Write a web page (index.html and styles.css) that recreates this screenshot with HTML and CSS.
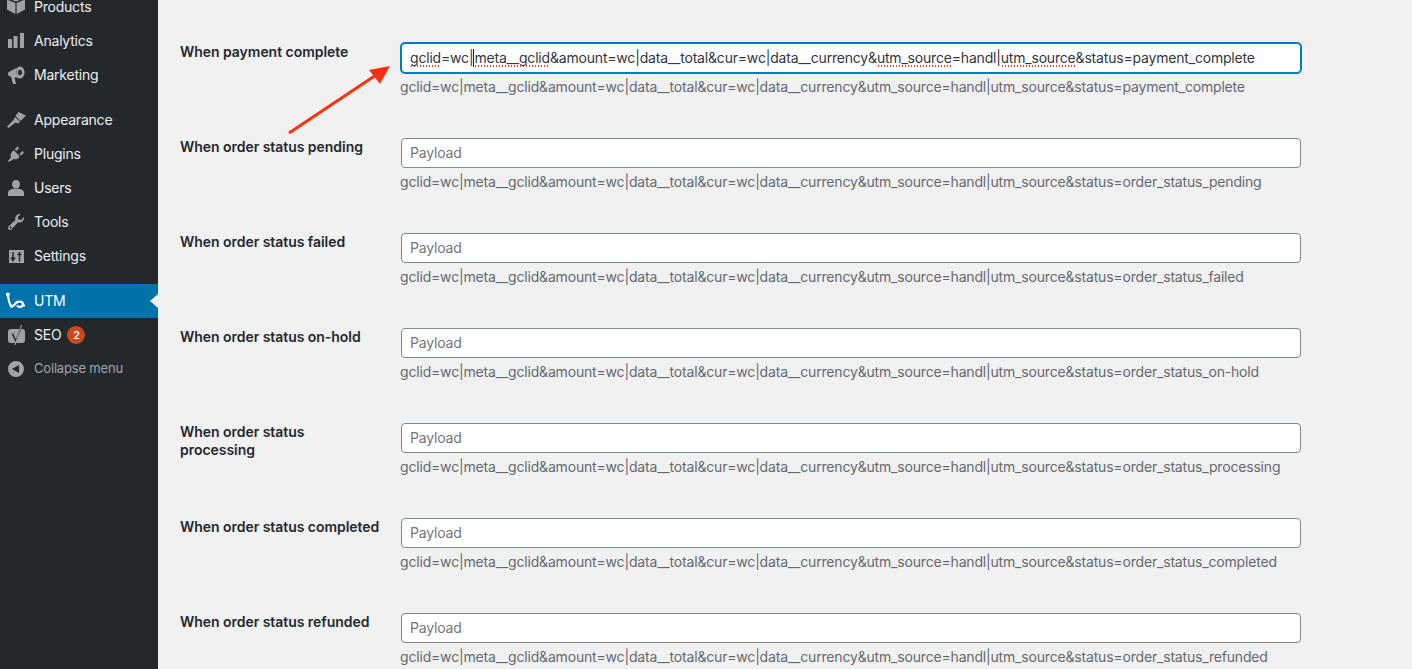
FILE: index.html
```html
<!DOCTYPE html>
<html lang="en">
<head>
<meta charset="utf-8">
<title>UTM settings</title>
<link rel="stylesheet" href="styles.css">
</head>
<body>
<div class="page">
  <nav class="sidebar">
    <a class="item"><svg class="icon" viewBox="0 0 20 20"><path d="M10 -4 1 -.5V1l9 3.500L19 1V-.5zM1 2.500v10L9.400 17V6zM19 2.500l-8.400 3.500v11l8.400-4.500z"/></svg><span>Products</span></a>
    <a class="item"><svg class="icon" viewBox="0 0 20 20"><path d="M2 8h4v9H2zM7.500 5h4v12h-4zM14 2h4v15h-4z"/></svg><span>Analytics</span></a>
    <a class="item sep"><svg class="icon" viewBox="0 0 20 20"><path d="M2 8.500c0-1 .8-1.600 1.600-2L11.500 2.500C9.800 6 10 10 12.500 13L8.600 12.200 10 19H7L5 11.700 3.500 11.200C2.500 10.800 2 10 2 8.500z"/><path fill-rule="evenodd" d="M14 1.500c2.500 0 4.500 2.700 4.500 6s-2 6-4.500 6-3.500-2.700-3.500-6 1-6 3.500-6zM14 4.800c-1.200 0-2 1.200-2 2.700s.8 2.700 2 2.700 2-1.200 2-2.700-.8-2.700-2-2.700z"/></svg><span>Marketing</span></a>
    <a class="item"><svg class="icon" viewBox="0 0 20 20"><path d="M12.500 2 20 5.500 14.500 11 9.500 6zM9 7l5 4.500-2 2-2.500-1L2.500 18 1 16.500 7.500 10z"/></svg><span>Appearance</span></a>
    <a class="item"><svg class="icon" viewBox="0 0 20 20"><path d="M8 6.500 13.500 12c-.5 2.500-3 4-6 3L3 18l-1-1 3-3.800C4 10.500 5.500 7.500 8 6.500zM11.500 2.500 13.200 4l-3 3L8.700 5.500zM16.500 7l1.500 1.500-3 3-1.500-1.500z"/></svg><span>Plugins</span></a>
    <a class="item"><svg class="icon" viewBox="0 0 20 20"><ellipse cx="10" cy="6.200" rx="3.800" ry="4.200"/><path d="M2 18v-3c0-2.500 3-4 5-4.200h6c2 .2 5 1.700 5 4.200v3z"/></svg><span>Users</span></a>
    <a class="item"><svg class="icon" viewBox="0 0 20 20"><path fill-rule="evenodd" d="M18 5c.5 3.500-2.500 6.300-6 5.300L6 16.700c-1 1.300-2.600 1.600-3.400.8S1.700 15 3 14l6.400-6c-1-3.500 1.800-6.300 5.400-6l-3 3 .6 2.500 2.500.6zM4.500 14.500a1 1 0 1 0 .01 0z"/></svg><span>Tools</span></a>
    <a class="item sep"><svg class="icon" viewBox="0 0 20 20"><rect x="3" y="4" width="15" height="13"/><path class="dark" d="M7 6v9.500M5 11.500l2 3 2-3M13.500 15.500V6M11.500 8.500h4"/></svg><span>Settings</span></a>
    <a class="item active"><svg class="icon" viewBox="0 0 20 20"><circle cx="1.800" cy="3.500" r="2"/><circle cx="5.500" cy="15.200" r="1.600"/><path class="utm" d="M1.800 3.500C2.500 8 3 13.500 5.500 15.200 8 16 8.500 13 10.500 11.500c2-1.500 6-1.500 6.500 1.500 0 3.500-4.500 3.700-6 1.500M16.500 14.500h2.500"/></svg><span>UTM</span></a>
    <a class="item"><svg class="icon" viewBox="0 0 20 20"><rect x="2" y="4" width="17" height="14" rx="3"/><path class="dark" d="M6.500 8.500 9.500 15.500M14.500 4 9.500 17"/><path class="slash" d="M15.500 0 9 20"/></svg><span>SEO</span><b class="badge">2</b></a>
    <a class="item collapse"><svg class="icon" viewBox="0 0 20 20"><path fill-rule="evenodd" d="M10 2a8 8 0 1 1 0 16 8 8 0 0 1 0-16zM13 6l-7 4 7 4z"/></svg><span>Collapse menu</span></a>
  </nav>

  <main class="content">
    <div class="row">
      <div class="label">When payment complete</div>
      <div class="field">
        <div class="input focused"><span class="sp">gclid</span>=wc|<i class="caret"></i><span class="sp">meta__gclid</span>&amp;amount=wc|data__total&amp;cur=wc|data__currency&amp;<span class="sp">utm_source</span>=handl|<span class="sp">utm_source</span>&amp;status=payment_complete</div>
        <p class="desc">gclid=wc|meta__gclid&amp;amount=wc|data__total&amp;cur=wc|data__currency&amp;utm_source=handl|utm_source&amp;status=payment_complete</p>
      </div>
    </div>
    <div class="row">
      <div class="label">When order status pending</div>
      <div class="field">
        <input class="input" placeholder="Payload">
        <p class="desc">gclid=wc|meta__gclid&amp;amount=wc|data__total&amp;cur=wc|data__currency&amp;utm_source=handl|utm_source&amp;status=order_status_pending</p>
      </div>
    </div>
    <div class="row">
      <div class="label">When order status failed</div>
      <div class="field">
        <input class="input" placeholder="Payload">
        <p class="desc">gclid=wc|meta__gclid&amp;amount=wc|data__total&amp;cur=wc|data__currency&amp;utm_source=handl|utm_source&amp;status=order_status_failed</p>
      </div>
    </div>
    <div class="row">
      <div class="label">When order status on-hold</div>
      <div class="field">
        <input class="input" placeholder="Payload">
        <p class="desc">gclid=wc|meta__gclid&amp;amount=wc|data__total&amp;cur=wc|data__currency&amp;utm_source=handl|utm_source&amp;status=order_status_on-hold</p>
      </div>
    </div>
    <div class="row">
      <div class="label">When order status<br>processing</div>
      <div class="field">
        <input class="input" placeholder="Payload">
        <p class="desc">gclid=wc|meta__gclid&amp;amount=wc|data__total&amp;cur=wc|data__currency&amp;utm_source=handl|utm_source&amp;status=order_status_processing</p>
      </div>
    </div>
    <div class="row">
      <div class="label">When order status completed</div>
      <div class="field">
        <input class="input" placeholder="Payload">
        <p class="desc">gclid=wc|meta__gclid&amp;amount=wc|data__total&amp;cur=wc|data__currency&amp;utm_source=handl|utm_source&amp;status=order_status_completed</p>
      </div>
    </div>
    <div class="row">
      <div class="label">When order status refunded</div>
      <div class="field">
        <input class="input" placeholder="Payload">
        <p class="desc">gclid=wc|meta__gclid&amp;amount=wc|data__total&amp;cur=wc|data__currency&amp;utm_source=handl|utm_source&amp;status=order_status_refunded</p>
      </div>
    </div>
  </main>

  <svg class="arrow" viewBox="0 0 110 75" width="110" height="75"><path d="M1 70 88 12" stroke="#ff2f0b" stroke-width="3" fill="none"/><path d="M102 3 92 21 81 7z" fill="#ff2f0b"/></svg>
</div>
</body>
</html>
```
FILE: styles.css
```css
* { box-sizing: border-box; }
html, body { margin: 0; height: 100%; overflow: hidden; }
body { background: #f1f1f1; font-family: Inter, "Liberation Sans", sans-serif; font-size: 14px; color: #23282d; }
.page { position: relative; display: flex; height: 669px; overflow: hidden; }

.sidebar { flex: 0 0 158px; width: 158px; background: #23282d; display: flex; flex-direction: column; }
.item { display: flex; align-items: center; height: 34px; padding-left: 6px; color: #eee; font-size: 14px; letter-spacing: -.22px; flex: none; }
.item:first-child { margin-top: -10px; }
.item.sep { margin-bottom: 11px; }
.item span { margin-bottom: 2px; }
.icon { width: 20px; height: 20px; margin-right: 8px; flex: none; fill: #9ea3a8; overflow: visible; }
.dark { fill: none; stroke: #23282d; stroke-width: 1.500; }
.slash { fill: none; stroke: #9ea3a8; stroke-width: 1; }
.active { background: #0073aa; color: #fff; position: relative; }
.active .icon { fill: #fff; }
.active .utm { fill: none; stroke: #fff; stroke-width: 2.200; }
.active::after { content: ""; position: absolute; right: 0; top: 10px; border: 7px solid transparent; border-left-width: 0; border-right-color: #f1f1f1; border-right-width: 8px; }
.badge { display: inline-flex; align-items: center; justify-content: center; width: 18px; height: 18px; margin-left: 6px; border-radius: 50%; background: #ca4a1f; color: #fff; font-size: 11px; font-weight: 500; }
.collapse { color: #a0a5aa; font-size: 13px; height: 33px; letter-spacing: -.18px; }
.collapse .icon { fill: #a0a5aa; }

.content { flex: 1; padding: 43px 0 0 22px; }
.row { display: flex; height: 95px; }
.label { width: 220px; flex: none; padding-right: 20px; font-weight: 600; line-height: 18px; font-size: 14px; letter-spacing: -.04px; color: #23282d; }
.field { width: 901px; flex: none; }
.input { display: block; width: 900px; height: 30px; margin-left: 1px; padding: 0 8px 2px; background: #fff; border: 1px solid #7e8993; border-radius: 4px; font: 14px/26px Inter, "Liberation Sans", sans-serif; letter-spacing: -.19px; color: #32373c; outline: none; white-space: nowrap; }
.input::placeholder { color: #72777c; opacity: 1; }
.focused { padding-bottom: 0; line-height: 28px; border-color: #007cba; box-shadow: 0 0 0 1px #007cba; }
.sp { padding-bottom: 1px; background: radial-gradient(circle, #e8392e .9px, transparent 1.100px) left bottom / 3px 2px repeat-x; }
.caret { display: inline-block; width: 1px; height: 18px; background: #222; vertical-align: -4px; }
.desc { margin: 5px 0 0; font-size: 14px; line-height: 17px; letter-spacing: -.18px; color: #646970; white-space: nowrap; }
.arrow { position: absolute; left: 288px; top: 63px; }
```
